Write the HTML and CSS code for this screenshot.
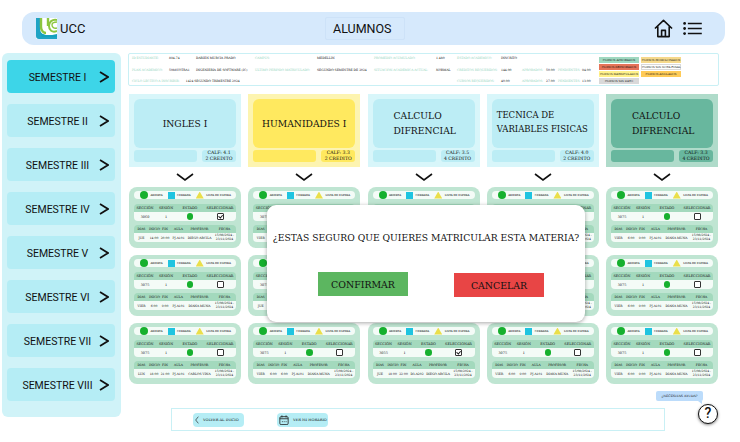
FILE: index.html
```html
<!DOCTYPE html>
<html lang="en">

<head>
    <meta charset="UTF-8">
    <meta name="viewport" content="width=device-width, initial-scale=1.0">
    <title>Alumnos</title>
    <link rel="stylesheet" href="styles.css">
</head>

<body>
    <header class="topbar">
        <div class="brand">
            <svg class="logo" viewBox="0 0 21 21">
                <rect width="21" height="21" fill="#fff" />
                <path d="M0 0h4v10c0 5 3 7 7 7h10v4H3c-2 0-3-1-3-3z" fill="#1fa3c4" />
                <path d="M4 14c3 4 9 4 17 2v3H6z" fill="#14a0bd" />
                <path d="M5 0v9c0 4 3 6 5 6" fill="none" stroke="#8cc63f" stroke-width="2.4" />
                <path d="M12 0v8" fill="none" stroke="#8cc63f" stroke-width="2.4" />
                <path d="M21 13c-5 2-8-1-8-5s3-7 8-6" fill="none" stroke="#8cc63f" stroke-width="2" />
                <path d="M21 10c-3 1-5-1-5-3s2-3 5-3" fill="none" stroke="#8cc63f" stroke-width="1.4" />
            </svg>
            <span>UCC</span>
        </div>
        <div class="page-title">ALUMNOS</div>
        <div class="top-icons">
            <svg class="icon-home" viewBox="0 0 20 20">
                <path d="M1 10 10 1.5 19 10M4 8v10.5h12V8M8 18.5v-6.5h4v6.5" fill="none" stroke="#111" stroke-width="1.7" stroke-linejoin="round" />
            </svg>
            <svg class="icon-list" viewBox="0 0 20 14">
                <circle cx="1.5" cy="1.5" r="1.5" fill="#111" />
                <circle cx="1.5" cy="7" r="1.5" fill="#111" />
                <circle cx="1.5" cy="12.5" r="1.5" fill="#111" />
                <path d="M5 1.5h15M5 7h15M5 12.5h15" stroke="#111" stroke-width="1.6" />
            </svg>
        </div>
    </header>

    <div class="layout">
        <nav class="sidebar">
            <a class="sem active"><span>SEMESTRE I</span><svg viewBox="0 0 10 12"><path d="M1 1 9 6 1 11" /></svg></a>
            <a class="sem"><span>SEMESTRE II</span><svg viewBox="0 0 10 12"><path d="M1 1 9 6 1 11" /></svg></a>
            <a class="sem"><span>SEMESTRE III</span><svg viewBox="0 0 10 12"><path d="M1 1 9 6 1 11" /></svg></a>
            <a class="sem"><span>SEMESTRE IV</span><svg viewBox="0 0 10 12"><path d="M1 1 9 6 1 11" /></svg></a>
            <a class="sem"><span>SEMESTRE V</span><svg viewBox="0 0 10 12"><path d="M1 1 9 6 1 11" /></svg></a>
            <a class="sem"><span>SEMESTRE VI</span><svg viewBox="0 0 10 12"><path d="M1 1 9 6 1 11" /></svg></a>
            <a class="sem"><span>SEMESTRE VII</span><svg viewBox="0 0 10 12"><path d="M1 1 9 6 1 11" /></svg></a>
            <a class="sem"><span>SEMESTRE VIII</span><svg viewBox="0 0 10 12"><path d="M1 1 9 6 1 11" /></svg></a>
        </nav>

        <main class="main">
            <section class="info">
                <div class="info-grid">
                    <span class="lbl">ID ESTUDIANTE:</span><span>894-74</span><span>DARIEN MURCIA PRADO</span>
                    <span class="lbl">CAMPUS:</span><span>MEDELLIN</span>
                    <span class="lbl">PROMEDIO ACUMULADO:</span><span>1.480</span>
                    <span class="lbl">ESTADO ACADEMICO:</span><span class="wide">INSCRITO</span>

                    <span class="lbl">PLAN ACADEMICO:</span><span>5088VOTRA1</span><span>INGENIERIA DE SOFTWARE (IC)</span>
                    <span class="lbl">ULTIMO PERIODO MATRICULADO:</span><span>SEGUNDO SEMESTRE DE 2024</span>
                    <span class="lbl">SITUACION ACADEMICA ACTUAL:</span><span>NORMAL</span>
                    <span class="lbl">CREDITOS REQUERIDOS:</span><span>144.00</span>
                    <span class="lbl">APROBADOS:</span><span>50.00</span><span class="lbl">PENDIENTES:</span><span>94.00</span>

                    <span class="lbl cycle">CICLO LECTIVO A INSCRIBIR: <b>1424 SEGUNDO TRIMESTRE 2024</b></span>
                    <span class="lbl skip">CURSOS REQUERIDOS:</span><span>40.00</span>
                    <span class="lbl">APROBADOS:</span><span>27.00</span><span class="lbl">PENDIENTES:</span><span>13.00</span>
                </div>
                <div class="legend-grid">
                    <span class="tag approved">CURSOS APROBADOS</span><span class="tag homolog">CURSOS HOMOLOGADOS</span>
                    <span class="tag failed">CURSOS REPROBADOS</span><span class="tag plain">CURSOS SIN NOTA FINAL</span>
                    <span class="tag enrolled">CURSOS MATRICULADOS</span><span class="tag annulled">CURSOS ANULADOS</span>
                    <span class="tag nodata">CURSOS SIN DATO</span>
                </div>
            </section>

            <section class="subjects">
                <div class="subject"><h3>INGLES I</h3><div class="subject-foot"><i></i><p>CALF: 4.1<br>2 CREDITO</p></div></div>
                <div class="subject yellow"><h3>HUMANIDADES I</h3><div class="subject-foot"><i></i><p>CALF: 3.3<br>2 CREDITO</p></div></div>
                <div class="subject"><h3 class="two">CALCULO<br>DIFRENCIAL</h3><div class="subject-foot"><i></i><p>CALF: 3.5<br>4 CREDITO</p></div></div>
                <div class="subject"><h3 class="left">TECNICA DE<br>VARIABLES FISICAS</h3><div class="subject-foot"><i></i><p>CALF: 4.0<br>2 CREDITO</p></div></div>
                <div class="subject green"><h3 class="two">CALCULO<br>DIFRENCIAL</h3><div class="subject-foot"><i></i><p>CALF: 3.3<br>4 CREDITO</p></div></div>
            </section>

            <div class="arrows">
                <svg viewBox="0 0 18 8"><path d="M1 1 9 7 17 1" /></svg>
                <svg viewBox="0 0 18 8"><path d="M1 1 9 7 17 1" /></svg>
                <svg viewBox="0 0 18 8"><path d="M1 1 9 7 17 1" /></svg>
                <svg viewBox="0 0 18 8"><path d="M1 1 9 7 17 1" /></svg>
                <svg viewBox="0 0 18 8"><path d="M1 1 9 7 17 1" /></svg>
            </div>

            <section class="sections">
                <!-- fila 1 -->
                <div class="card">
                    <div class="key"><em class="dot"></em>ABIERTA<em class="sq"></em>CERRADA<em class="tri"></em>LISTA DE ESPERA</div>
                    <div class="th c4"><span>SECCIÓN</span><span>SESIÓN</span><span>ESTADO</span><span>SELECCIONAR</span></div>
                    <div class="td c4"><span>3060</span><span>1</span><span><em class="dot"></em></span><span><em class="box on"></em></span></div>
                    <div class="th c6"><span>DIAS</span><span>INICIO</span><span>FIN</span><span>AULA</span><span>PROFESOR</span><span>FECHA</span></div>
                    <div class="td c6"><span>JUE</span><span>14:00</span><span>20:00</span><span>PJ-A101</span><span>DIEGO ARCILA</span><span>15/08/2024 - 23/11/2024</span></div>
                </div>
                <div class="card">
                    <div class="key"><em class="dot"></em>ABIERTA<em class="sq"></em>CERRADA<em class="tri"></em>LISTA DE ESPERA</div>
                    <div class="th c4"><span>SECCIÓN</span><span>SESIÓN</span><span>ESTADO</span><span>SELECCIONAR</span></div>
                    <div class="td c4"><span>3075</span><span>1</span><span><em class="dot"></em></span><span><em class="box"></em></span></div>
                    <div class="th c6"><span>DIAS</span><span>INICIO</span><span>FIN</span><span>AULA</span><span>PROFESOR</span><span>FECHA</span></div>
                    <div class="td c6"><span>VIER</span><span>6:00</span><span>9:00</span><span>PJ-A101</span><span>DIANA MUNA</span><span>15/08/2024 - 23/11/2024</span></div>
                </div>
                <div class="card">
                    <div class="key"><em class="dot"></em>ABIERTA<em class="sq"></em>CERRADA<em class="tri"></em>LISTA DE ESPERA</div>
                    <div class="th c4"><span>SECCIÓN</span><span>SESIÓN</span><span>ESTADO</span><span>SELECCIONAR</span></div>
                    <div class="td c4"><span>3075</span><span>1</span><span><em class="dot"></em></span><span><em class="box"></em></span></div>
                    <div class="th c6"><span>DIAS</span><span>INICIO</span><span>FIN</span><span>AULA</span><span>PROFESOR</span><span>FECHA</span></div>
                    <div class="td c6"><span>VIER</span><span>6:00</span><span>9:00</span><span>PJ-A101</span><span>DIANA MUNA</span><span>15/08/2024 - 23/11/2024</span></div>
                </div>
                <div class="card">
                    <div class="key"><em class="dot"></em>ABIERTA<em class="sq"></em>CERRADA<em class="tri"></em>LISTA DE ESPERA</div>
                    <div class="th c4"><span>SECCIÓN</span><span>SESIÓN</span><span>ESTADO</span><span>SELECCIONAR</span></div>
                    <div class="td c4"><span>3075</span><span>1</span><span><em class="dot"></em></span><span><em class="box"></em></span></div>
                    <div class="th c6"><span>DIAS</span><span>INICIO</span><span>FIN</span><span>AULA</span><span>PROFESOR</span><span>FECHA</span></div>
                    <div class="td c6"><span>VIER</span><span>6:00</span><span>9:00</span><span>PJ-A101</span><span>DIANA MUNA</span><span>15/08/2024 - 23/11/2024</span></div>
                </div>
                <div class="card">
                    <div class="key"><em class="dot"></em>ABIERTA<em class="sq"></em>CERRADA<em class="tri"></em>LISTA DE ESPERA</div>
                    <div class="th c4"><span>SECCIÓN</span><span>SESIÓN</span><span>ESTADO</span><span>SELECCIONAR</span></div>
                    <div class="td c4"><span>3075</span><span>1</span><span><em class="dot"></em></span><span><em class="box"></em></span></div>
                    <div class="th c6"><span>DIAS</span><span>INICIO</span><span>FIN</span><span>AULA</span><span>PROFESOR</span><span>FECHA</span></div>
                    <div class="td c6"><span>VIER</span><span>6:00</span><span>9:00</span><span>PJ-A101</span><span>DIANA MUNA</span><span>15/08/2024 - 23/11/2024</span></div>
                </div>

                <!-- fila 2 -->
                <div class="card">
                    <div class="key"><em class="dot"></em>ABIERTA<em class="sq"></em>CERRADA<em class="tri"></em>LISTA DE ESPERA</div>
                    <div class="th c4"><span>SECCIÓN</span><span>SESIÓN</span><span>ESTADO</span><span>SELECCIONAR</span></div>
                    <div class="td c4"><span>3075</span><span>1</span><span><em class="dot"></em></span><span><em class="box"></em></span></div>
                    <div class="th c6"><span>DIAS</span><span>INICIO</span><span>FIN</span><span>AULA</span><span>PROFESOR</span><span>FECHA</span></div>
                    <div class="td c6"><span>VIER</span><span>6:00</span><span>9:00</span><span>PJ-A101</span><span>DIANA MUNA</span><span>15/08/2024 - 23/11/2024</span></div>
                </div>
                <div class="card">
                    <div class="key"><em class="dot"></em>ABIERTA<em class="sq"></em>CERRADA<em class="tri"></em>LISTA DE ESPERA</div>
                    <div class="th c4"><span>SECCIÓN</span><span>SESIÓN</span><span>ESTADO</span><span>SELECCIONAR</span></div>
                    <div class="td c4"><span>3075</span><span>1</span><span><em class="dot"></em></span><span><em class="box"></em></span></div>
                    <div class="th c6"><span>DIAS</span><span>INICIO</span><span>FIN</span><span>AULA</span><span>PROFESOR</span><span>FECHA</span></div>
                    <div class="td c6"><span>JUE</span><span>6:00</span><span>9:00</span><span>PJ-A101</span><span>DIANA MUNA</span><span>15/08/2024 - 23/11/2024</span></div>
                </div>
                <div class="card">
                    <div class="key"><em class="dot"></em>ABIERTA<em class="sq"></em>CERRADA<em class="tri"></em>LISTA DE ESPERA</div>
                    <div class="th c4"><span>SECCIÓN</span><span>SESIÓN</span><span>ESTADO</span><span>SELECCIONAR</span></div>
                    <div class="td c4"><span>3075</span><span>1</span><span><em class="dot"></em></span><span><em class="box"></em></span></div>
                    <div class="th c6"><span>DIAS</span><span>INICIO</span><span>FIN</span><span>AULA</span><span>PROFESOR</span><span>FECHA</span></div>
                    <div class="td c6"><span>VIER</span><span>6:00</span><span>9:00</span><span>PJ-A101</span><span>DIANA MUNA</span><span>15/08/2024 - 23/11/2024</span></div>
                </div>
                <div class="card">
                    <div class="key"><em class="dot"></em>ABIERTA<em class="sq"></em>CERRADA<em class="tri"></em>LISTA DE ESPERA</div>
                    <div class="th c4"><span>SECCIÓN</span><span>SESIÓN</span><span>ESTADO</span><span>SELECCIONAR</span></div>
                    <div class="td c4"><span>3075</span><span>1</span><span><em class="dot"></em></span><span><em class="box"></em></span></div>
                    <div class="th c6"><span>DIAS</span><span>INICIO</span><span>FIN</span><span>AULA</span><span>PROFESOR</span><span>FECHA</span></div>
                    <div class="td c6"><span>VIER</span><span>6:00</span><span>9:00</span><span>PJ-A101</span><span>DIANA MUNA</span><span>15/08/2024 - 23/11/2024</span></div>
                </div>
                <div class="card">
                    <div class="key"><em class="dot"></em>ABIERTA<em class="sq"></em>CERRADA<em class="tri"></em>LISTA DE ESPERA</div>
                    <div class="th c4"><span>SECCIÓN</span><span>SESIÓN</span><span>ESTADO</span><span>SELECCIONAR</span></div>
                    <div class="td c4"><span>3075</span><span>1</span><span><em class="dot"></em></span><span><em class="box"></em></span></div>
                    <div class="th c6"><span>DIAS</span><span>INICIO</span><span>FIN</span><span>AULA</span><span>PROFESOR</span><span>FECHA</span></div>
                    <div class="td c6"><span>VIER</span><span>6:00</span><span>9:00</span><span>PJ-A101</span><span>DIANA MUNA</span><span>15/08/2024 - 23/11/2024</span></div>
                </div>

                <!-- fila 3 -->
                <div class="card">
                    <div class="key"><em class="dot"></em>ABIERTA<em class="sq"></em>CERRADA<em class="tri"></em>LISTA DE ESPERA</div>
                    <div class="th c4"><span>SECCIÓN</span><span>SESIÓN</span><span>ESTADO</span><span>SELECCIONAR</span></div>
                    <div class="td c4"><span>3075</span><span>1</span><span><em class="dot"></em></span><span><em class="box"></em></span></div>
                    <div class="th c6"><span>DIAS</span><span>INICIO</span><span>FIN</span><span>AULA</span><span>PROFESOR</span><span>FECHA</span></div>
                    <div class="td c6"><span>LUN</span><span>18:00</span><span>21:00</span><span>PJ-A101</span><span>CARLOS VINA</span><span>15/08/2024 - 23/11/2024</span></div>
                </div>
                <div class="card">
                    <div class="key"><em class="dot"></em>ABIERTA<em class="sq"></em>CERRADA<em class="tri"></em>LISTA DE ESPERA</div>
                    <div class="th c4"><span>SECCIÓN</span><span>SESIÓN</span><span>ESTADO</span><span>SELECCIONAR</span></div>
                    <div class="td c4"><span>3075</span><span>1</span><span><em class="dot"></em></span><span><em class="box"></em></span></div>
                    <div class="th c6"><span>DIAS</span><span>INICIO</span><span>FIN</span><span>AULA</span><span>PROFESOR</span><span>FECHA</span></div>
                    <div class="td c6"><span>VIER</span><span>6:00</span><span>6:00</span><span>PJ-A101</span><span>DIANA MUNA</span><span>15/08/2024 - 23/11/2024</span></div>
                </div>
                <div class="card">
                    <div class="key"><em class="dot"></em>ABIERTA<em class="sq"></em>CERRADA<em class="tri"></em>LISTA DE ESPERA</div>
                    <div class="th c4"><span>SECCIÓN</span><span>SESIÓN</span><span>ESTADO</span><span>SELECCIONAR</span></div>
                    <div class="td c4"><span>3055</span><span>1</span><span><em class="dot"></em></span><span><em class="box on"></em></span></div>
                    <div class="th c6"><span>DIAS</span><span>INICIO</span><span>FIN</span><span>AULA</span><span>PROFESOR</span><span>FECHA</span></div>
                    <div class="td c6"><span>JUE</span><span>18:00</span><span>22:00</span><span>D3-A202</span><span>DIEGO ARCILA</span><span>15/08/2024 - 23/11/2024</span></div>
                </div>
                <div class="card">
                    <div class="key"><em class="dot"></em>ABIERTA<em class="sq"></em>CERRADA<em class="tri"></em>LISTA DE ESPERA</div>
                    <div class="th c4"><span>SECCIÓN</span><span>SESIÓN</span><span>ESTADO</span><span>SELECCIONAR</span></div>
                    <div class="td c4"><span>3075</span><span>1</span><span><em class="dot"></em></span><span><em class="box"></em></span></div>
                    <div class="th c6"><span>DIAS</span><span>INICIO</span><span>FIN</span><span>AULA</span><span>PROFESOR</span><span>FECHA</span></div>
                    <div class="td c6"><span>VIER</span><span>6:00</span><span>9:00</span><span>PJ-A101</span><span>DIANA MUNA</span><span>15/08/2024 - 23/11/2024</span></div>
                </div>
                <div class="card">
                    <div class="key"><em class="dot"></em>ABIERTA<em class="sq"></em>CERRADA<em class="tri"></em>LISTA DE ESPERA</div>
                    <div class="th c4"><span>SECCIÓN</span><span>SESIÓN</span><span>ESTADO</span><span>SELECCIONAR</span></div>
                    <div class="td c4"><span>3075</span><span>1</span><span><em class="dot"></em></span><span><em class="box"></em></span></div>
                    <div class="th c6"><span>DIAS</span><span>INICIO</span><span>FIN</span><span>AULA</span><span>PROFESOR</span><span>FECHA</span></div>
                    <div class="td c6"><span>VIER</span><span>6:00</span><span>9:00</span><span>PJ-A101</span><span>DIANA MUNA</span><span>15/08/2024 - 23/11/2024</span></div>
                </div>
            </section>
        </main>
    </div>

    <footer class="actions">
        <a class="action">
            <svg class="icon-back" viewBox="0 0 6 12"><path d="M5 1 1 6 5 11" /></svg>
            VOLVER AL INICIO
        </a>
        <a class="action">
            <svg class="icon-cal" viewBox="0 0 12 12">
                <rect x="1" y="2" width="10" height="9.5" rx="1.5" />
                <path d="M1 4.5h10M3.5 .5v2.5M8.5 .5v2.5M3.5 8h1M5.7 8h1M8 8h1" />
            </svg>
            VER MI HORARIO
        </a>
    </footer>

    <!-- ayuda -->
    <div class="help-tip">¿NECESITAS AYUDA?</div>
    <div class="help-btn">?</div>

    <!-- confirmacion -->
    <div class="modal">
        <p>¿ESTAS SEGURO QUE QUIERES MATRICULAR ESTA MATERIA?</p>
        <div class="modal-buttons">
            <button class="confirm">CONFIRMAR</button>
            <button class="cancel">CANCELAR</button>
        </div>
    </div>
</body>

</html>
```

FILE: styles.css
```css
* {
    margin: 0;
    padding: 0;
    box-sizing: border-box;
}

body {
    position: relative;
    width: 740px;
    height: 442px;
    overflow: hidden;
    background: #fff;
    color: #111;
    font-family: "DejaVu Serif", serif;
}

.topbar {
    display: flex;
    align-items: center;
    height: 33px;
    margin: 12px 15px 0 22px;
    padding-left: 14px;
    background: #d6e9fc;
    border-radius: 12px;
}

.brand {
    display: flex;
    align-items: center;
    gap: 3px;
    width: 289px;
    font-family: Roboto, sans-serif;
    font-size: 13px;
}

.logo {
    width: 21px;
    height: 21px;
}

.page-title {
    width: 80px;
    height: 23px;
    padding-left: 7px;
    border: 1px solid #cde2f8;
    border-radius: 2px;
    font-family: Roboto, sans-serif;
    font-size: 12.5px;
    line-height: 21px;
}

.top-icons {
    display: flex;
    align-items: center;
    gap: 10px;
    margin-left: 249px;
}

.icon-home {
    width: 19px;
    height: 19px;
}

.icon-list {
    width: 19px;
    height: 13px;
}

.layout {
    display: flex;
    gap: 7px;
    margin: 8px 0 0 2px;
}

.sidebar {
    display: flex;
    flex-direction: column;
    gap: 11px;
    width: 119px;
    height: 364px;
    padding: 7px 6px 0 5px;
    background: #d0f3f8;
    border-radius: 6px;
}

.sem {
    display: flex;
    align-items: center;
    height: 33px;
    padding-right: 6px;
    background: #b5edf5;
    border-radius: 4px;
    font-family: Roboto, sans-serif;
    font-size: 10.5px;
}

.sem.active {
    background: #3dd5e8;
}

.sem span {
    flex: 1;
    padding: 1px 0 0 9px;
    text-align: center;
}

.sem svg {
    width: 10px;
    height: 12px;
}

.sem path {
    fill: none;
    stroke: #111;
    stroke-width: 1.7;
}

.main {
    width: 591px;
}

.info {
    display: flex;
    height: 33px;
    padding: 2px 0 0 3px;
    border: 1px solid #c9f0f5;
    border-radius: 2px;
    font-size: 3px;
}

.info-grid {
    display: grid;
    grid-template-columns: 37px 27px 59px 62px 57px 62px 21px 44px 21px 24px 12px 24px 16px;
    grid-auto-rows: 11.5px;
    align-items: start;
    white-space: nowrap;
}

.info-grid .wide {
    grid-column: span 5;
}

.info-grid .cycle {
    grid-column: 1 / 8;
}

.info-grid .skip {
    grid-column: 8 / 9;
}

.info-grid b {
    margin-left: 5px;
    color: #111;
    font-weight: 400;
}

.lbl {
    color: #93d4bd;
}

.legend-grid {
    display: grid;
    grid-template-columns: 40px 40px;
    grid-auto-rows: 6px;
    gap: 1px 2px;
    margin: 1px 0 0 1px;
    font-size: 2.8px;
    text-align: center;
}

.tag {
    line-height: 6px;
    white-space: nowrap;
}

.approved { background: #9fd8c0; }
.failed { background: #e57358; }
.enrolled { background: #fff18a; }
.nodata { background: #d9d9d9; }
.homolog { background: #f5d98c; }
.plain { background: #fff; border: 1px solid #d9d9d9; line-height: 4px; }
.annulled { background: #ffcb57; }

.subjects,
.arrows,
.sections {
    display: grid;
    grid-template-columns: repeat(5, 112px);
    justify-content: space-between;
    padding: 0 0 0 1px;
    width: 590px;
}

.subjects {
    margin-top: 8px;
}

.subject {
    height: 73px;
    padding: 5px 5px 0;
    background: #d8f6fa;
}

.subject h3 {
    display: flex;
    flex-direction: column;
    justify-content: center;
    height: 49px;
    padding: 0 4px;
    background: #bcedf5;
    border-radius: 6px;
    font-size: 9.2px;
    font-weight: 400;
    line-height: 15px;
    text-align: center;
}

.subject h3.two {
    display: block;
    padding: 9px 0 0 21px;
    text-align: left;
}

.subject h3.left {
    display: block;
    padding: 9px 0 0 5px;
    font-size: 8.5px;
    line-height: 14px;
    text-align: left;
}

.subject-foot {
    display: flex;
    gap: 5px;
    margin-top: 2px;
}

.subject-foot i {
    width: 63px;
    height: 12px;
    background: #bcedf5;
    border-radius: 3px;
}

.subject-foot p {
    flex: 1;
    height: 12px;
    background: #bcedf5;
    border-radius: 3px;
    font-size: 4.6px;
    line-height: 6px;
    text-align: center;
    white-space: nowrap;
}

.subject.yellow {
    background: #fdf4b0;
}

.subject.yellow h3,
.subject.yellow i,
.subject.yellow p {
    background: #ffe95f;
}

.subject.green {
    background: #afdbca;
}

.subject.green h3,
.subject.green i,
.subject.green p {
    background: #68b79e;
}

.arrows {
    height: 20px;
    justify-items: center;
    align-items: start;
    padding-top: 6px;
}

.arrows svg {
    width: 18px;
    height: 8px;
}

.arrows path {
    fill: none;
    stroke: #111;
    stroke-width: 1.6;
}

.sections {
    row-gap: 7px;
}

.card {
    height: 61px;
    padding: 4px 5px 0;
    background: #bfe5d2;
    border-radius: 8px;
    font-size: 3.4px;
}

.key {
    display: flex;
    align-items: center;
    gap: 2.5px;
    height: 8px;
    margin-bottom: 5px;
    padding-left: 6px;
    background: #f4fbf7;
    border-radius: 4px;
    font-size: 2.6px;
    white-space: nowrap;
}

.dot {
    display: inline-block;
    flex: none;
    width: 8px;
    height: 8px;
    background: #16b02e;
    border-radius: 50%;
}

.sq {
    flex: none;
    width: 7px;
    height: 7px;
    margin-left: 2.5px;
    background: #1fc4e0;
}

.tri {
    flex: none;
    width: 8px;
    height: 7px;
    margin-left: 2.5px;
    background: #eadf4a;
    clip-path: polygon(50% 0, 100% 100%, 0 100%);
}

.th,
.td {
    display: grid;
    align-items: center;
    height: 8px;
    text-align: center;
    white-space: nowrap;
}

.th {
    background: #a3d9bd;
    border-radius: 4px 4px 0 0;
}

.td {
    height: 9px;
    background: #f4fbf7;
    border-radius: 0 0 4px 4px;
}

.c4 {
    grid-template-columns: 22px 20px 28px 32px;
}

.c4.td {
    margin-bottom: 4px;
}

.c6 {
    grid-template-columns: 15px 10px 12px 15px 27px 23px;
    font-size: 3px;
}

.td.c6 span:last-child {
    line-height: 3.6px;
    white-space: normal;
}

.td .dot {
    width: 6.5px;
    height: 6.5px;
    vertical-align: middle;
}

.box {
    display: inline-block;
    position: relative;
    width: 7px;
    height: 7px;
    vertical-align: middle;
    border: 1px solid #333;
    border-radius: 1px;
    background: #fff;
}

.box.on::after {
    content: "";
    position: absolute;
    left: 1.2px;
    top: 0;
    width: 1.8px;
    height: 3.4px;
    border: solid #111;
    border-width: 0 1px 1px 0;
    transform: rotate(40deg);
}

.actions {
    position: absolute;
    left: 171px;
    top: 408px;
    display: flex;
    align-items: center;
    gap: 33px;
    width: 494px;
    height: 23px;
    padding-left: 21px;
    border: 1px solid #c9f0f5;
    font-size: 3.6px;
}

.action {
    display: flex;
    align-items: center;
    gap: 4px;
    width: 51px;
    height: 14px;
    padding-left: 2px;
    background: #b5edf5;
    border-radius: 4px;
    white-space: nowrap;
}

.action svg {
    fill: none;
    stroke: #222;
    stroke-width: 1;
}

.icon-back {
    width: 4px;
    height: 8px;
}

.icon-cal {
    width: 10px;
    height: 10px;
}

.help-tip {
    position: absolute;
    left: 656px;
    top: 391px;
    width: 47px;
    height: 10px;
    background: #bcdcfb;
    border-radius: 2px;
    font-size: 3.2px;
    line-height: 10px;
    text-align: center;
}

.help-tip::after {
    content: "";
    position: absolute;
    right: 1px;
    top: 10px;
    border-top: 3px solid #bcdcfb;
    border-left: 4px solid transparent;
}

.help-btn {
    position: absolute;
    left: 698px;
    top: 404px;
    width: 20px;
    height: 20px;
    background: #fff;
    border: 1.6px solid #111;
    border-radius: 50%;
    box-shadow: 0 1px 3px rgba(0, 0, 0, 0.5);
    font-family: Roboto, sans-serif;
    font-size: 14px;
    font-weight: 500;
    line-height: 17px;
    text-align: center;
}

.modal {
    position: absolute;
    left: 267px;
    top: 205px;
    width: 318px;
    height: 117px;
    padding-top: 27px;
    background: #fff;
    border-radius: 9px;
    box-shadow: 0 1px 4px rgba(0, 0, 0, 0.35);
}

.modal p {
    font-size: 9.2px;
    line-height: 12px;
    text-align: center;
    white-space: nowrap;
}

.modal-buttons {
    display: flex;
    align-items: flex-start;
    gap: 46px;
    margin-top: 28px;
    padding-left: 51px;
}

.modal button {
    width: 90px;
    height: 24px;
    border: none;
    color: #111;
    font-family: "DejaVu Serif", serif;
    font-size: 9.4px;
}

.confirm {
    background: #5cb660;
}

.cancel {
    margin-top: 1px;
    background: #e84545;
}
```
